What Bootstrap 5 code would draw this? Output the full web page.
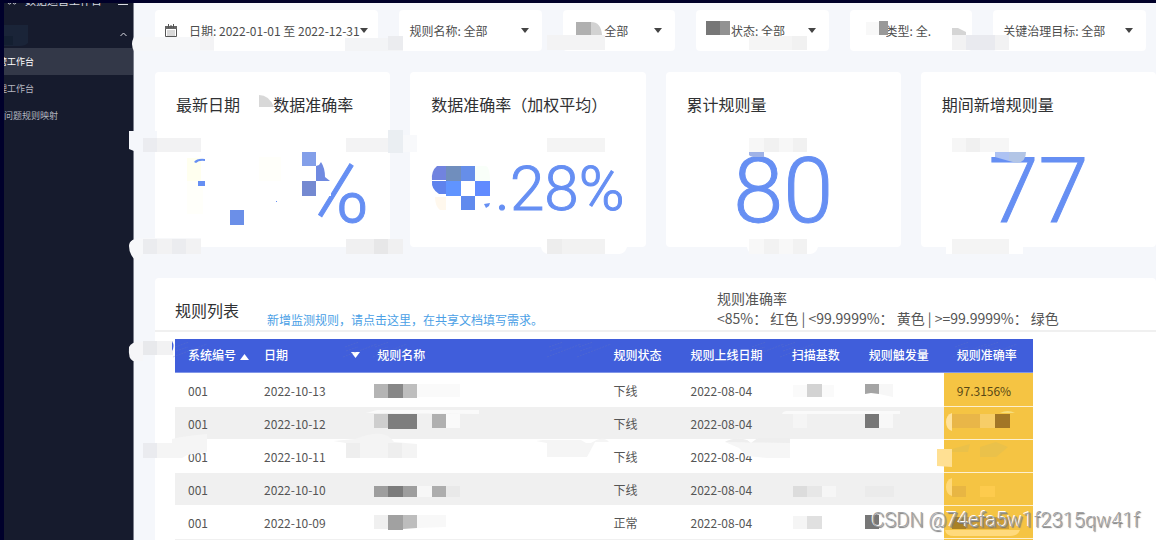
<!DOCTYPE html>
<html lang="zh-CN">
<head>
<meta charset="utf-8">
<meta name="viewport" content="width=device-width, initial-scale=1">
<title>数据运营工作台</title>
<link href="https://cdn.jsdelivr.net/npm/bootstrap@5.3.0/dist/css/bootstrap.min.css" rel="stylesheet">
<style>
body{font-family:"Noto Sans CJK SC",sans-serif;font-size:12px;line-height:18px;color:#555;background:#f5f7fb;height:100vh;overflow:hidden;border-top:3px solid #000029}
.shell{height:100%}
.side{width:134px;flex:none;background:#161b2d;border-left:4px solid #00002b;border-right:1px solid #7b7f8c;overflow:hidden}
.brand{height:20px;margin-top:-11px;padding:0 4px 0 3px;font-size:11px;line-height:16px;color:#d9dbe2}
.side-group{height:36px;color:#d9dbe2;padding:8px 6px 0 0}
.side-link{display:block;height:27px;line-height:27px;font-size:9px;color:#b4b7c0;text-decoration:none;white-space:nowrap}
.side-link.tucked{text-indent:-6px}
.side-link.active{background:#333848;color:#fff}
.main{padding:7px 0 0 21px;min-width:0;overflow:hidden}
.filters{display:grid;grid-template-columns:minmax(0,224fr) minmax(0,143fr) minmax(0,112fr) minmax(0,133fr) minmax(0,123fr) minmax(0,153fr);gap:21px;padding-right:10px}
.filter{width:100%;height:41px;border:0;border-radius:4px;background-color:#fff;color:#4d4d4d;font-size:12px;padding:0 10px;text-align:left;white-space:nowrap}
select.filter{appearance:none;background-image:url("data:image/svg+xml,%3Csvg xmlns='http://www.w3.org/2000/svg' viewBox='0 0 8 5'%3E%3Cpath d='M0 0h8L4 5z' fill='%23444'/%3E%3C/svg%3E");background-repeat:no-repeat;background-size:8px 5px;background-position:right 13px center}
.filter.w-a{padding:0 0 0 41px}.filter.w-b{padding:0 0 0 35px}.filter.w-c{padding:0 0 0 36px}
select.w-c{background-image:none}
.stats{gap:20px;margin-top:21px}
.stat{flex:1 1 0;height:175px;background:#fff;border-radius:4px;padding:20px 21px}
.stat h2{font-size:16px;line-height:24px;font-weight:400;color:#303133;margin:0;white-space:pre}
.num{font-family:Roboto,sans-serif;font-weight:300;color:#668ff3;-webkit-text-stroke:1px #668ff3;font-size:90px;line-height:92px;margin-top:30px;text-align:center}
.num-md{font-size:62px;line-height:86px;text-align:right}
.num-end{text-align:right}
.panel{margin-top:31px;background:#fff;border-radius:4px;padding-left:20px;height:600px}
.panel-head{height:54px;border-bottom:2px solid #f0f0f0;margin-left:-20px;padding-left:20px}
.panel-head h2{font-size:16px;line-height:24px;font-weight:400;color:#303133;margin:0;padding-top:20px;width:92px}
.doc{color:#4b9fe6;text-decoration:none;padding-top:33px;flex:1 1 0;white-space:nowrap}
.legend-note{font-size:14px;line-height:20px;padding-top:10px;width:439px;white-space:pre}
.rules{table-layout:fixed;width:calc(100% - 123px);margin:7px 0 0;border-collapse:separate;border-spacing:0}
.rules th{height:34px;padding:0 0 1px 13px;background:#405edb;color:#fff;font-weight:500;white-space:nowrap;vertical-align:middle;border-bottom:1px solid #8196e8}
.rules td{height:33px;padding:1px 0 0 13px;vertical-align:middle;border-bottom:1px solid #fff}
.rules tbody tr:first-child td{height:34px;padding-top:2px}
.rules tbody tr:nth-child(even) td{background:#f0f0f0}
.rules tbody tr td:last-child{background:#f5c443;border-color:#fdf0cf;color:#574714}
.c1{width:76px}.c2{width:113px}.c3{width:236px}.c4{width:77px}.c5{width:101px}.c6{width:77px}.c7{width:88px}.c8{width:89px}
.smudge{position:absolute;left:0;top:0;pointer-events:none}
.mark-line{position:absolute;right:16px;bottom:6px;font-family:Roboto,sans-serif;font-size:20px;line-height:28px;color:#a2a2a2;text-shadow:-1px -1px 0 #fff,1px 1px 1px #777;font-weight:300}
</style>
</head>
<body>
<div class="shell d-flex">
  <nav class="side">
    <div class="brand d-flex"><svg class="me-2" width="10" height="14" viewBox="0 0 10 14"><path d="M1 8v2q0 2 1.500 2T4 10V8M6 8v2q0 2 1.500 2T9 10V8" fill="none" stroke="#d9dbe2"/></svg><span>数据运营工作台</span><svg class="ms-auto" width="11" height="14" viewBox="0 0 11 14"><path d="M0 12.500h10" stroke="#d9dbe2"/></svg></div>
    <div class="side-group d-flex align-items-center justify-content-end"><svg width="7" height="5" viewBox="0 0 7 5"><path d="M.5 4 3.500 1 6.500 4" fill="none" stroke="currentColor"/></svg></div>
    <a class="side-link tucked active" href="#">营工作台</a>
    <a class="side-link tucked" href="#">理工作台</a>
    <a class="side-link" href="#">问题规则映射</a>
  </nav>
  <main class="main flex-grow-1">
    <div class="filters">
      <button type="button" class="filter w-date d-flex align-items-center"><svg class="me-2 flex-shrink-0" width="12" height="13" viewBox="0 0 12 13"><path d="M.5 2.500h11v10H.5z" fill="none" stroke="#555"/><path d="M0 2h12v3H0z" fill="#666"/><path d="M3.500 0v4M8.500 0v4M6 1v3" stroke="#555"/><path d="M2.500 7h7M2.500 9h7M2.500 11h7" stroke="#666" stroke-dasharray="1 1"/></svg><span class="ms-1">日期: 2022-01-01 至 2022-12-31</span><svg width="8" height="5" viewBox="0 0 8 5"><path d="M0 0h8L4 5z" fill="#444"/></svg></button>
      <select class="filter w-name" aria-label="规则名称"><option>规则名称: 全部</option></select>
      <select class="filter w-a" aria-label="系统"><option>全部</option></select>
      <select class="filter w-b" aria-label="状态"><option>状态: 全部</option></select>
      <select class="filter w-c" aria-label="类型"><option>类型: 全.</option></select>
      <select class="filter w-d" aria-label="关键治理目标"><option>关键治理目标: 全部</option></select>
    </div>
    <div class="stats d-flex">
      <section class="stat"><h2 class="d-flex"><span>最新日期</span><span class="ms-auto me-3 pe-0">数据准确率</span></h2><div class="num num-end">%</div></section>
      <section class="stat"><h2>数据准确率（加权平均）</h2><div class="num num-md">.28%</div></section>
      <section class="stat"><h2>累计规则量</h2><div class="num">80</div></section>
      <section class="stat"><h2>期间新增规则量</h2><div class="num">77</div></section>
    </div>
    <section class="panel">
      <div class="panel-head d-flex">
        <h2>规则列表</h2>
        <a class="doc" href="#">新增监测规则，请点击这里，在共享文档填写需求。</a>
        <div class="legend-note">规则准确率
&lt;85%： 红色 | &lt;99.9999%： 黄色 | &gt;=99.9999%： 绿色</div>
      </div>
      <table class="rules">
        <colgroup><col class="c1"><col class="c2"><col class="c3"><col class="c4"><col class="c5"><col class="c6"><col class="c7"><col class="c8"></colgroup>
        <thead><tr>
          <th>系统编号<svg class="ms-1" width="9" height="6" viewBox="0 0 9 6"><path d="M0 6h9L4.500 0z" fill="#fff"/></svg></th>
          <th><div class="d-flex align-items-center justify-content-between pe-1"><span>日期</span><svg width="9" height="6" viewBox="0 0 9 6"><path d="M0 0h9L4.500 6z" fill="#fff"/></svg></div></th>
          <th>规则名称</th><th>规则状态</th><th>规则上线日期</th><th>扫描基数</th><th>规则触发量</th><th>规则准确率</th>
        </tr></thead>
        <tbody>
          <tr><td>001</td><td>2022-10-13</td><td></td><td>下线</td><td>2022-08-04</td><td></td><td></td><td>97.3156%</td></tr>
          <tr><td>001</td><td>2022-10-12</td><td></td><td>下线</td><td>2022-08-04</td><td></td><td></td><td></td></tr>
          <tr><td>001</td><td>2022-10-11</td><td></td><td>下线</td><td>2022-08-04</td><td></td><td></td><td></td></tr>
          <tr><td>001</td><td>2022-10-10</td><td></td><td>下线</td><td>2022-08-04</td><td></td><td></td><td></td></tr>
          <tr><td>001</td><td>2022-10-09</td><td></td><td>正常</td><td>2022-08-04</td><td></td><td></td><td></td></tr>
          <tr><td></td><td></td><td></td><td></td><td></td><td></td><td></td><td></td></tr>
        </tbody>
      </table>
    </section>
  </main>
</div>
<!-- mosaic strokes that hide private values -->
<svg class="smudge" width="1156" height="540" viewBox="0 0 1156 540" aria-hidden="true">
  <path d="M4 25h24v18q-3 3-8 3H4z" fill="#1a2438"/><path d="M4 36h9v9H4z" fill="#141f31"/>
  <!-- filter row -->
  <path d="M134 37h80v14h-80q-4-7 0-14z" fill="#f6f7f9"/><path d="M200 36h14v14h-14z" fill="#f3f3f5"/><path d="M214 38h131v13H214z" fill="#fff"/><path d="M345 38h58v13h-58z" fill="#f3f4f6"/><path d="M388 36h15v14h-15z" fill="#ebecef"/>
  <path d="M547 35h58v15h-58z" fill="#f3f3f4"/><path d="M576 22h15v13h-15z" fill="#b0b0b0"/><path d="M591 22q10 0 11 13h-11z" fill="#d2d2d2"/>
  <path d="M706 21h14v14h-14z" fill="#777"/><path d="M720 21h10v14h-10z" fill="#929292"/>
  <path d="M749 36h58v14h-58z" fill="#f5f5f5"/><path d="M792 36h15v14h-15z" fill="#f1f1f1"/>
  <path d="M866 22h13v13h-13z" fill="#f8f8f8"/><path d="M879 21h9v14h-9z" fill="#999"/><path d="M952 28h6l8 4v3h-14z" fill="#d5d5d5"/><path d="M952 35h57v15h-57z" fill="#f2f2f3"/><path d="M966 35h29v15h-29z" fill="#e9eaef"/>
  <!-- figure cards -->
  <path d="M259 95q10 0 15 12h-15z" fill="#d8d8d8"/>
  <path d="M129 131h28v20h-23l-5-2z" fill="#f5f7fb"/><path d="M143 138h58v14h-58z" fill="#f2f2f3"/><path d="M143 138h14v14h-14z" fill="#ebecf0"/><path d="M346 138h57v14h-57z" fill="#f3f3f4"/><path d="M388 130h15v23h-15z" fill="#eaeef2"/><path d="M403 135h14v17h-14z" fill="#f8f9fb"/>
  <path d="M288 152h57l-14 38v6h-43z" fill="#fff"/><path d="M187 158h14v23h-14z" fill="#ffffef"/><path d="M187 181h16v33h-16zM259 157h22v24h-22z" fill="#fffffa"/><path d="M194 162q3-4 11-3v2q-6-1-9 2zM198 181h7v5h-7z" fill="#668ff3"/><path d="M230 210h14v15h-14z" fill="#6b8fe8"/><path d="M276 201h1v1h-1z" fill="#668ff3"/>
  <path d="M302 152h14v14h-14z" fill="#839fe9"/><path d="M302 181h14v15h-14z" fill="#7489d1"/><path d="M316 166l3-1 2-3q4 6 4 15l5 4h-14z" fill="#708ae1"/>
  <path d="M129 246q0-8 14-8h58v16h-58q-2 4-6 7-8-5-8-15z" fill="#f7f8fa"/><path d="M143 239h58v15h-58z" fill="#f2f2f3"/><path d="M172 239h14v15h-14zM143 239h14v15h-14z" fill="#ebecef"/><path d="M346 239h57v15h-57z" fill="#f0f0f1"/><path d="M374 239h14v15h-14z" fill="#e7e7e8"/>
  <path d="M437 166h9v14h-14q-1-9 5-14z" fill="#7183df"/><path d="M446 166h15v15h-15z" fill="#708ebd"/><path d="M461 166h14v15h-14z" fill="#668ee9"/><path d="M432 181h14v13h-7q-8-5-7-13z" fill="#5f83ed"/><path d="M446 181h15v15h-15z" fill="#6094ff"/><path d="M475 181h15v15h-15z" fill="#618bff"/><path d="M461 196h14v14h-14z" fill="#608aee"/><path d="M475 166h11q4 1 4 15h-15z" fill="#f9fff9"/><path d="M435 197h11v13h-6q-5-4-5-13z" fill="#fff8ed"/><path d="M484 204l6-1-1 3-3 2z" fill="#668ff3"/>
  <path d="M547 138h58v14h-58z" fill="#f4f4f4"/><path d="M541 247h86q-2 7-8 7h-70q-7 0-8-7z" fill="#fff"/><path d="M547 239h58v15h-58z" fill="#f2f2f2"/><path d="M547 239h15v15h-15z" fill="#ededed"/>
  <path d="M749 138h58v14h-58z" fill="#f7f7f7"/><path d="M764 138h15v14h-15zM793 138h14v14h-14z" fill="#f1f1f1"/><path d="M749 152h15v5h-8q-5 0-7-2z" fill="#9fb2e7"/><path d="M747 247h71q-2 7-8 7h-56q-6 0-7-7z" fill="#fff"/><path d="M749 239h58v15h-58z" fill="#f8f8f8"/><path d="M764 239h15v15h-15zM793 239h14v15h-14z" fill="#f2f2f2"/>
  <path d="M952 138h57v14h-57z" fill="#f6f6f6"/><path d="M966 138h14v14h-14z" fill="#f0f0f0"/><path d="M995 152h14v9l-14-4z" fill="#adc2f3"/><path d="M1009 152h17q0 10-9 11l-8-2z" fill="#b2c5e6"/><path d="M946 247h77v7h-77z" fill="#fff"/><path d="M952 239h57v15h-57z" fill="#f4f4f4"/>
  <!-- header strip -->
  <path d="M155 338h18v19h-18z" fill="#fff"/><path d="M143 341h30v14h-30z" fill="#f2f2f3"/><path d="M129 347q3-6 14-5v19h-10q-5-2-4-14z" fill="#f6f6f8"/><path d="M143 341h14v14h-14z" fill="#e8e9ec"/><path d="M172 341q3 5 0 10z" fill="#405edb"/>
  <g fill="none" stroke="#6b7abf" stroke-dasharray="2 1" opacity=".3"><path id="faint" d="M175 347l14-5M176 351l12-4M173 357l34-13"/><use href="#faint" x="170"/><use href="#faint" x="200"/><use href="#faint" x="374"/><use href="#faint" x="404"/><use href="#faint" x="577"/><use href="#faint" x="607"/><use href="#faint" x="780"/><use href="#faint" x="810"/></g>
  <!-- name column -->
  <path d="M374 384h14v14h-14z" fill="#b4b4b4"/><path d="M388 384h15v14h-15z" fill="#878787"/><path d="M403 384h14v14h-14z" fill="#bebebe"/><path d="M417 384h43v13h-43z" fill="#fafafa"/>
  <path d="M366 413l11-3h102v4z" fill="#fafafa"/><path d="M374 414h14v14h-14z" fill="#cecece"/><path d="M388 414h29v15h-29z" fill="#7e7e7e"/><path d="M432 414h14v14h-14z" fill="#b0b0b0"/><path d="M446 414h14v14h-14z" fill="#fafafa"/>
  <path d="M374 486h14v11h-14z" fill="#9e9e9e"/><path d="M388 486h15v11h-15z" fill="#7c7c7c"/><path d="M403 486h14v11h-14z" fill="#9e9e9e"/><path d="M417 486h15v11h-15z" fill="#f7f7f7"/><path d="M432 486h14v11h-14z" fill="#adadad"/><path d="M446 486h14v11h-14z" fill="#e9e9e9"/>
  <path d="M374 515h14v14h-14z" fill="#f0f0f0"/><path d="M388 515h15v15h-15z" fill="#a1a1a1"/><path d="M403 515h14v13l-14 1z" fill="#bdbdbd"/><path d="M417 515h29v12l-29 1z" fill="#f8f8f8"/>
  <!-- strokes over the third row -->
  <path d="M172 439q12-3 35-5v18l-20 3-5 3h-39v-15h29z" fill="#f5f5f5"/><path d="M143 443h14v15h-14z" fill="#eaebef"/><path d="M333 441l22-2q30-12 39 3l23 2v14h-71v-15z" fill="#f4f4f4"/><path d="M346 443h14v15h-14zM388 443h14v15h-14z" fill="#eee"/><path d="M536 441l7-1h38l5 3h5q12-8 18-1h-14l-8 15h-40v-14z" fill="#f5f5f5"/><path d="M725 442q10-6 22-2l4 3 7-5h32v20h-23l-20-2-8-8z" fill="#f6f6f6"/><path d="M725 442q10-6 22-2l4 3 7-5h32v5z" fill="#eee"/>
  <!-- counters -->
  <path d="M793 385h41v12h-41z" fill="#fafafa"/><path d="M807 384h15v13h-15z" fill="#d3d3d3"/><path d="M865 384h14v10l-8-1-6 1z" fill="#a4a4a4"/><path d="M879 384h14v13l-14-3z" fill="#f7f7f7"/>
  <path d="M782 414q1-3 5-3h113v3z" fill="#fafafa"/><path d="M793 414h14v14h-14z" fill="#f5f5f5"/><path d="M865 414h14v14h-14z" fill="#777"/><path d="M879 414h14v14h-14z" fill="#f8f8f8"/>
  <path d="M793 486h14v11h-14z" fill="#dcdcdc"/><path d="M807 486h15v11h-15z" fill="#e7e7e7"/><path d="M822 486h14v11h-14z" fill="#f6f6f6"/><path d="M865 486h29v11h-29z" fill="#ebebeb"/>
  <path d="M793 516h14v13h-14z" fill="#f5f5f5"/><path d="M807 516h15v13h-15z" fill="#e0e0e0"/><path d="M865 515h14v14h-14z" fill="#777"/>
  <!-- accuracy column -->
  <path d="M952 413v18q-6-2-6-9t6-9z" fill="#ffe29b"/><path d="M952 414h28v14h-28z" fill="#e9b648"/><path d="M980 414h15v14h-15z" fill="#f7cd67"/><path d="M995 414h15v14h-15z" fill="#a27626"/><path d="M1000 413q8-4 15 0z" fill="#f7de7c"/>
  <path d="M937 449h15v18l-15-1z" fill="#ffe093"/><path d="M952 449l18-5-2 8h-16zM980 447l16-5 12 5-12 10h-16z" fill="#eac14a"/>
  <path d="M952 478v18q-6-2-6-9t6-9z" fill="#ffd979"/><path d="M952 486h14v11h-14z" fill="#e8b643"/><path d="M980 486h15v11h-15z" fill="#fdcb4d"/>
  <path d="M952 517h14v12h-14z" fill="#a98125"/><path d="M966 517h43v12h-43z" fill="#cf9f36"/><path d="M945 530h75q-2 6-10 6h-56q-8 0-9-6z" fill="#ffda7c"/>
</svg>
<div class="mark-line">CSDN @74efa5w1f2315qw41f</div>
<script src="https://cdn.jsdelivr.net/npm/bootstrap@5.3.0/dist/js/bootstrap.bundle.min.js"></script>
</body>
</html>
